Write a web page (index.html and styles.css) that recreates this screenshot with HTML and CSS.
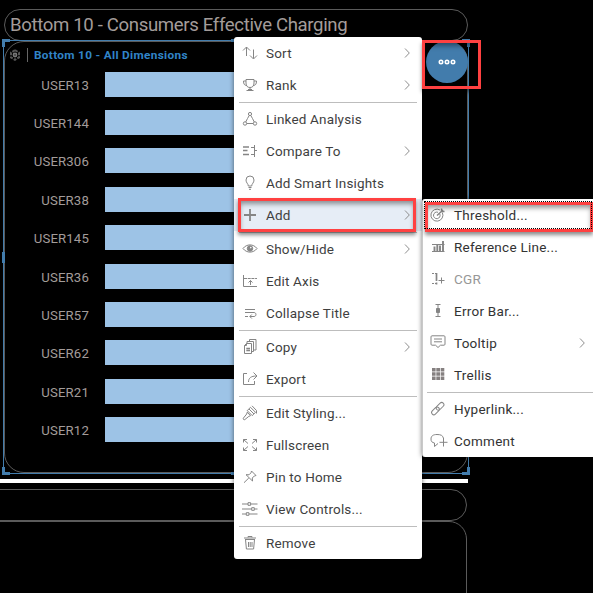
FILE: index.html
```
<!DOCTYPE html>
<html lang="en">
<head>
<meta charset="utf-8">
<title>Consumers Effective Charging</title>
<link rel="stylesheet" href="styles.css">
</head>
<body>
<main class="page">
  <h1 class="page-title"><span>Bottom 10 - Consumers Effective Charging</span></h1>
  <section class="widget">
    <header class="widget-head">
      <svg class="gear" viewBox="0 0 12 12"><path d="M6 1.2 10 3.6v4.8L6 10.8 2 8.4V3.6z" fill="none" stroke="#555" stroke-width="2" stroke-dasharray="3 1.2"/><circle cx="6" cy="6" r="2.4" fill="#777"/><circle cx="6" cy="6" r=".8" fill="#222"/></svg>
      <h2><span>Bottom 10 - All Dimensions</span></h2>
    </header>
    <div class="chart">
      <div class="row"><span class="cat">USER13</span><i class="bar"></i></div>
      <div class="row"><span class="cat">USER144</span><i class="bar"></i></div>
      <div class="row"><span class="cat">USER306</span><i class="bar"></i></div>
      <div class="row"><span class="cat">USER38</span><i class="bar"></i></div>
      <div class="row"><span class="cat">USER145</span><i class="bar"></i></div>
      <div class="row"><span class="cat">USER36</span><i class="bar"></i></div>
      <div class="row"><span class="cat">USER57</span><i class="bar"></i></div>
      <div class="row"><span class="cat">USER62</span><i class="bar"></i></div>
      <div class="row"><span class="cat">USER21</span><i class="bar"></i></div>
      <div class="row"><span class="cat">USER12</span><i class="bar"></i></div>
    </div>
    <div class="selection"><i class="tl"></i><i class="tr"></i><i class="bl"></i><i class="br"></i><i class="tm"></i><i class="bm"></i><i class="lm"></i></div>
    <button class="more" aria-label="More actions"><svg viewBox="0 0 18 6"><g fill="none" stroke="#fff" stroke-width="1.6"><circle cx="3" cy="3" r="1.7"/><circle cx="9" cy="3" r="1.7"/><circle cx="15" cy="3" r="1.7"/></g></svg></button>
  </section>
  <div class="divider"></div>
  <div class="lower-title"></div>
  <div class="lower-body"></div>
</main>

<nav class="menu main-menu">
  <div class="item"><svg class="icon" viewBox="0 0 16 16"><path d="M4.500 11V2M1 5.500 4.500 2 8 5.500M11.500 4.500v9M8 10.500l3.500 3.500 3.500-3.500"/></svg><span>Sort</span><svg class="chev" viewBox="0 0 6 10"><path d="M1 .5 5.300 5 1 9.500"/></svg></div>
  <div class="item"><svg class="icon" viewBox="0 0 16 16"><path d="M4 2.500h8V6c0 3-1.500 4.500-4 4.500S4 9 4 6zM4 4H1.500c0 3 1 4.500 3.300 4.500M12 4h2.500c0 3-1 4.500-3.300 4.500M8 10.500v2M4.500 13.500h7M6 12.500h4"/></svg><span>Rank</span><svg class="chev" viewBox="0 0 6 10"><path d="M1 .5 5.300 5 1 9.500"/></svg></div>
  <hr>
  <div class="item"><svg class="icon" viewBox="0 0 16 16"><circle cx="8" cy="3" r="1.600"/><circle cx="3" cy="12.500" r="1.700"/><circle cx="13" cy="12.500" r="1.700"/><path d="M7.200 4.500 5.500 7.500 3.700 11M8.800 4.500l1.700 3 1.800 3.500M4.700 12.500h6.600"/></svg><span>Linked Analysis</span></div>
  <div class="item"><svg class="icon" viewBox="0 0 16 16"><path stroke-width="1.600" d="M1 4h6M1 7.500h4.500M1 11.500h6"/><path d="M9 4.500h3.500M9 11.500h3.500M12.500 2v12M12.500 7.500H15"/></svg><span>Compare To</span><svg class="chev" viewBox="0 0 6 10"><path d="M1 .5 5.300 5 1 9.500"/></svg></div>
  <div class="item"><svg class="icon" viewBox="0 0 16 16"><path d="M6.300 11c0-2.500-2.300-3-2.300-6a4 4 0 0 1 8 0c0 3-2.300 3.500-2.300 6zM6.500 12.500h3M7 14.300h2"/></svg><span>Add Smart Insights</span></div>
  <div class="item selected"><svg class="icon" viewBox="0 0 16 16"><path stroke-width="1.800" d="M8 2v12M2 8h12"/></svg><span>Add</span><svg class="chev" viewBox="0 0 6 10"><path d="M1 .5 5.300 5 1 9.500"/></svg></div>
  <hr>
  <div class="item"><svg class="icon" viewBox="0 0 16 16"><path d="M1 7.500C4.500 2.700 11.500 2.700 15 7.500 11.500 12.300 4.500 12.300 1 7.500z"/><circle cx="8" cy="7.500" r="2.700" fill="#858585"/><circle cx="8.800" cy="6.600" r=".8" fill="#fff" stroke="none"/></svg><span>Show/Hide</span><svg class="chev" viewBox="0 0 6 10"><path d="M1 .5 5.300 5 1 9.500"/></svg></div>
  <div class="item"><svg class="icon" viewBox="0 0 16 16"><path d="M1.500 2v11.500H15M8.500 12V7.500M6.500 9.500l2-2 2 2"/><path stroke-dasharray="3 .7" d="M2 5.500h13"/></svg><span>Edit Axis</span></div>
  <div class="item"><svg class="icon" viewBox="0 0 16 16"><path d="M3 4.500h10M3 7.500h9c2.600 0 2.600 4 0 4H8M9.800 9.500l-2 2 2 2M3 11.500h3"/></svg><span>Collapse Title</span></div>
  <hr>
  <div class="item"><svg class="icon" viewBox="0 0 16 16"><path d="M4.500 4.500h5v10h-7V6.500zM4.500 4.500v2h-2M5 4.500v-2h6.500v10h-2M7.500 2.500v-2H14v10.500h-2.500"/><path stroke-width="1.300" d="M4.300 9.500H8M4.300 11.500H8"/></svg><span>Copy</span><svg class="chev" viewBox="0 0 6 10"><path d="M1 .5 5.300 5 1 9.500"/></svg></div>
  <div class="item"><svg class="icon" viewBox="0 0 16 16"><path d="M5 2.500H1.500v11H12.500V10M6.500 11c0-4 2.500-6 8-6M11.500 1.500 15 5l-3.500 3.500"/></svg><span>Export</span></div>
  <hr>
  <div class="item"><svg class="icon" viewBox="0 0 16 16"><path d="m8.500 2.300 5 5-3.300 3.300-5-5zM10 .8l4.500 4.700v3M5.200 7.200l3.300 3.500-1.700.7-4 3.200c-1 .5-2-.5-1.400-1.500L4.700 9z"/><path d="m7 4 5 5"/></svg><span>Edit Styling...</span></div>
  <div class="item"><svg class="icon" viewBox="0 0 16 16"><path d="M1.500 5.500v-3h3.500M1.500 2.500 6 6.500M11 2.500h3.500v3M14.500 2.500 10 6.500M1.500 10.500v3H5M1.500 13.500 6 9.500M14.500 10.500v3H11M14.500 13.500 10 9.500"/></svg><span>Fullscreen</span></div>
  <div class="item"><svg class="icon" viewBox="0 0 16 16"><path d="m9.500 2 4.500 4.500-1.700.5-2 2 .2 3-6.500-6.300 3 .1 2-2zM6.800 9 2 13.700"/></svg><span>Pin to Home</span></div>
  <div class="item"><svg class="icon" viewBox="0 0 16 16"><path d="M0 3h6M9 3h6.500M0 8h9.500M12.500 8h3M0 13h4M7 13h8.500"/><path d="M6 1.700h2.600v2.600H6zM9.700 6.700h2.600v2.600H9.700zM4.300 11.700h2.600v2.600H4.300z"/></svg><span>View Controls...</span></div>
  <hr>
  <div class="item"><svg class="icon" viewBox="0 0 16 16"><path d="M2 3h12M6 2.500v-1h4v1M3 4.500h10M3.500 4.500l.9 9.500h7.200l.9-9.500M6.500 7v5M8.200 7v5M10 7v5"/></svg><span>Remove</span></div>
</nav>

<nav class="menu sub-menu">
  <div class="item focused"><svg class="icon" viewBox="0 0 16 16"><path d="M12.300 5.500A6 6 0 1 1 10 3M9.800 7A3.300 3.300 0 1 1 8 5.300"/><path stroke-width="1.500" d="m7 8.500 6-5.500M11.500 1.500v3h3"/></svg><span>Threshold...</span></div>
  <div class="item"><svg class="icon" viewBox="0 0 16 16"><path stroke-width="1" d="M2 5.500h12.500M2 12.500h12.500"/><path stroke-width="1.900" d="M4.500 7.500V12M7.300 5V12M10 6.500V12M13 2V12"/></svg><span>Reference Line...</span></div>
  <div class="item disabled"><svg class="icon" viewBox="0 0 16 16"><path stroke-dasharray="2 1" d="M2 2.500h4M2 12.500h4"/><path stroke-width="1.700" d="M6.500 2v8M6.500 11.500v2"/><path d="M11.500 6.500v6M8.500 9.500h6"/></svg><span>CGR</span></div>
  <div class="item"><svg class="icon" viewBox="0 0 16 16"><path d="M5.500 1.500h5M8 1.500v12M5.500 13.500h5"/><path fill="#858585" d="M6.500 5.500h3v4h-3z"/></svg><span>Error Bar...</span></div>
  <div class="item"><svg class="icon" viewBox="0 0 16 16"><path d="M2 .8h12c.6 0 1 .4 1 1v7.400c0 .6-.4 1-1 1h-3.500L8 12.500l-2.500-2.300H2c-.6 0-1-.4-1-1V1.800c0-.6.4-1 1-1zM4 4h8M4 6.800h8"/></svg><span>Tooltip</span><svg class="chev" viewBox="0 0 6 10"><path d="M1 .5 5.300 5 1 9.500"/></svg></div>
  <div class="item"><svg class="icon" viewBox="0 0 16 16"><path stroke="none" fill="#858080" d="M2 1h3.600v3.500H2zM6.300 1H10v3.500H6.300zM10.700 1h3.600v3.500h-3.600zM2 5.200h3.600v3.600H2zM6.300 5.200H10v3.600H6.300zM10.700 5.200h3.600v3.600h-3.600zM2 9.500h3.600V13H2zM6.300 9.500H10V13H6.300zM10.700 9.500h3.600V13h-3.600z"/></svg><span>Trellis</span></div>
  <hr>
  <div class="item"><svg class="icon" viewBox="0 0 16 16"><g transform="rotate(-45 8 7.500)"><rect x="0" y="5.200" width="9" height="4.400" rx="2.200"/><rect x="6.500" y="5.200" width="9" height="4.400" rx="2.200"/></g></svg><span>Hyperlink...</span></div>
  <div class="item"><svg class="icon wide" viewBox="0 0 18 16"><path d="M13.500 5.500C13 2.500 11 1.500 7 1.500c-4 0-6 1.500-6 4.500 0 2.500 1 3.500 3.500 4v3.500L8 10.500M13.500 5v8.500M9.500 9.300h8"/></svg><span>Comment</span></div>
</nav>

<div class="mark mark-more"></div>
<div class="mark mark-add"></div>
<div class="mark mark-threshold"></div>
</body>
</html>
```
FILE: styles.css
```
* { box-sizing: border-box; }
html, body { margin: 0; height: 100%; background: #000; overflow: hidden; }
body { position: relative; font-family: Roboto, "Liberation Sans", sans-serif; }
h1, h2 { margin: 0; font-weight: 400; }

.page { width: 469px; padding-top: 9px; }
.page-title {
  margin-left: 4px; width: 464px; height: 32px; padding-left: 6px;
  border: 1px solid #5b5b5b; border-radius: 16px;
  font-size: 18.6px; line-height: 30px; letter-spacing: -.35px; color: #a39c9a;
  white-space: nowrap;
}
.page-title span { margin-left: -1px; }

.widget {
  position: relative; margin-left: 4px; width: 464px; height: 432px;
  border: 1px solid #5b5b5b; border-radius: 20px;
}
.widget-head { display: flex; align-items: center; height: 26px; padding-left: 4px; }
.gear { width: 12px; height: 12px; margin-right: 6px; }
.widget-head h2 {
  border-left: 1px solid #666; padding-left: 6px; line-height: 14px;
  font-size: 11.8px; font-weight: 700; color: #3184c8; letter-spacing: .32px;
}
.chart { display: grid; grid-auto-rows: 38.4px; padding-top: 3.6px; }
.row { display: flex; height: 25px; }
.cat {
  width: 84px; margin-right: 16px; text-align: right; color: #a39c9a;
  font-size: 13.2px; line-height: 27px; letter-spacing: .15px;
}
.bar { width: 300px; height: 25px; background: #9dc3e6; }

.selection { position: absolute; inset: -2px; border: 1px solid #427cac; }
.selection i { position: absolute; width: 8px; height: 8px; border: 0 solid #427cac; }
.selection .tl { left: -2px; top: -2px; border-width: 3px 0 0 3px; }
.selection .tr { right: -2px; top: -2px; border-width: 3px 3px 0 0; }
.selection .bl { left: -2px; bottom: -2px; border-width: 0 0 3px 3px; }
.selection .br { right: -2px; bottom: -2px; border-width: 0 3px 3px 0; }
.selection .tm { left: 227px; top: -2px; border-top-width: 3px; }
.selection .bm { left: 227px; bottom: -2px; border-bottom-width: 3px; }
.selection .lm { left: -2px; top: 211px; height: 11px; border-left-width: 3px; }

.more {
  position: absolute; left: 421px; top: -1px; width: 42px; height: 42px;
  border: 0; border-radius: 50%; padding: 0; background: #427cac;
  display: flex; align-items: center; justify-content: center;
}
.more svg { width: 18px; height: 6px; }

.divider { width: 468px; height: 4px; margin-top: 6px; background: #fff; }
.lower-title { width: 487px; height: 32px; margin: 6px 0 0 -20px; border: 1px solid #5b5b5b; border-radius: 16px; }
.lower-body { width: 487px; height: 100px; margin-left: -20px; border: 1px solid #5b5b5b; border-radius: 18px; }

.menu { position: absolute; background: #fff; border-radius: 3px; box-shadow: 0 0 5px rgba(0,0,0,.55); color: #3f3f3f; }
.main-menu { left: 234px; top: 37px; width: 188px; }
.sub-menu { left: 422px; top: 199px; width: 180px; border-left: 1px solid #c9c9c9; color: #333; }
.menu hr { height: 1px; margin: 1px 5px 0; border: 0; background: #bdbdbd; }
.sub-menu hr { margin-left: 4px; }
.item { display: flex; align-items: center; height: 32px; padding: 0 12px 0 8px; font-size: 13.5px; letter-spacing: .17px; white-space: nowrap; }
.sub-menu .item { padding: 0 17px 0 7px; letter-spacing: .26px; }
.item span { margin-left: 8px; line-height: 32px; flex: 1; }
.icon { width: 16px; height: 16px; flex: none; fill: none; stroke: #858585; stroke-width: 1; }
.icon.wide { width: 18px; margin-right: -2px; }
.chev { width: 6px; height: 10px; fill: none; stroke: #8e8e8e; stroke-width: 1; }
.selected { background: #e6edf6; }
.menu .disabled { color: #979797; }
.focused { position: relative; }
.focused::after { content: ""; position: absolute; inset: 2px 10px 2px 1px; border: 1px dotted #000; z-index: 2; }

.mark { position: absolute; border: 3px solid #ff4141; box-shadow: 0 3px 4px rgba(0,0,0,.45), inset 0 4px 5px -1px rgba(0,0,0,.4); }
.mark-more { left: 422px; top: 40px; width: 59px; height: 49px; }
.mark-add { left: 238px; top: 198px; width: 178px; height: 34px; }
.mark-threshold { left: 425px; top: 202px; width: 168px; height: 30px; }
```
